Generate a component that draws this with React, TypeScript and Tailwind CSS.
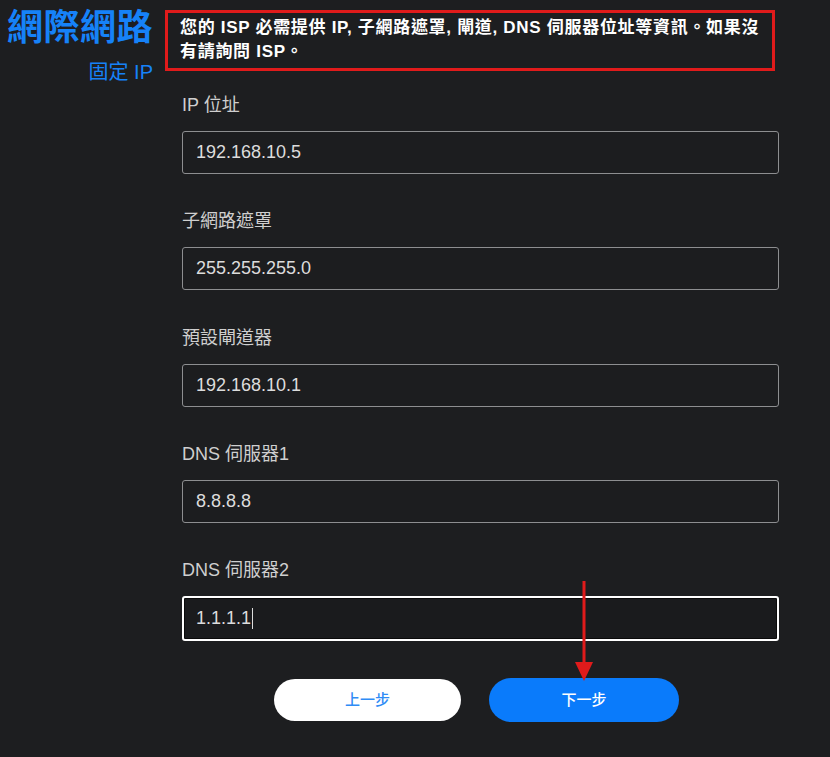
import { FunctionComponent } from "react";

const fontStack = "font-['Liberation_Sans','Noto_Sans_CJK_TC',sans-serif]";

type Field = { label: string; value: string; focused?: boolean };

const fields: Field[] = [
  { label: "IP 位址", value: "192.168.10.5" },
  { label: "子網路遮罩", value: "255.255.255.0" },
  { label: "預設閘道器", value: "192.168.10.1" },
  { label: "DNS 伺服器1", value: "8.8.8.8" },
  { label: "DNS 伺服器2", value: "1.1.1.1", focused: true },
];

const FormField: FunctionComponent<{ field: Field }> = ({ field }) => {
  return (
    <div className="flex flex-col">
      <div className="text-[18px] leading-[24px] text-[#cfcfcf]">{field.label}</div>
      {field.focused ? (
        <div className="mt-[14px] h-[45px] rounded-[3px] border-2 border-white bg-[#1a1b1d] shadow-[inset_0_0_0_1px_#0a0a0a] flex items-center pl-[12px]">
          <span className="text-[18px] text-[#dcdcdc]">{field.value}</span>
          <span className="ml-[1px] w-px h-[21px] bg-[#dcdcdc]" />
        </div>
      ) : (
        <div className="mt-[14px] h-[43px] rounded-[3px] border border-[#8d8e90] bg-[#1c1d1f] flex items-center pl-[13px]">
          <span className="text-[18px] text-[#dcdcdc]">{field.value}</span>
        </div>
      )}
    </div>
  );
};

const App: FunctionComponent = () => {
  return (
    <div className={`relative w-[830px] h-[757px] overflow-hidden bg-[#1d1e20] ${fontStack}`}>
      <div className="flex">
        {/* left title column */}
        <div className="w-[155px] flex flex-col items-end pr-[2px] pt-[4px]">
          <h1 className="text-[36px] leading-[48px] font-bold text-[#1682f8] tracking-[0.5px]">
            網際網路
          </h1>
          <div className="mt-[8px] text-[20px] leading-[24px] text-[#1682f8]">固定 IP</div>
        </div>

        {/* right content column */}
        <div className="ml-[10px] w-[614px] pt-[10px]">
          <div className="w-[610px] h-[61px] border-[3px] border-[#e01b1b] pl-[12px] pt-[3px]">
            <p className="text-[17px] leading-[24px] font-bold text-white tracking-[0.7px]">
              您的 ISP 必需提供 IP, 子網路遮罩, 閘道, DNS 伺服器位址等資訊。如果沒
              <br />
              有請詢問 ISP。
            </p>
          </div>

          <div className="pl-[17px] pt-[22px] flex flex-col gap-[35.25px]">
            {fields.map((f) => (
              <FormField key={f.label} field={f} />
            ))}
          </div>

          <div className="pl-[109px] mt-[37px] flex items-center gap-[28px]">
            <button className="w-[187px] h-[42px] rounded-full bg-white text-[15px] font-medium text-[#2f8cf5]">
              上一步
            </button>
            <button className="w-[190px] h-[44px] rounded-full bg-[#0a7bfb] text-[15px] font-medium text-white">
              下一步
            </button>
          </div>
        </div>
      </div>

      {/* red annotation arrow */}
      <svg
        className="absolute left-[574px] top-[580px]"
        width="20"
        height="102"
        viewBox="0 0 20 102"
      >
        <rect x="8.5" y="1" width="3" height="84" fill="#e01b1b" />
        <polygon points="1,82 19,82 10,101" fill="#e01b1b" />
      </svg>
    </div>
  );
};

export default App;
